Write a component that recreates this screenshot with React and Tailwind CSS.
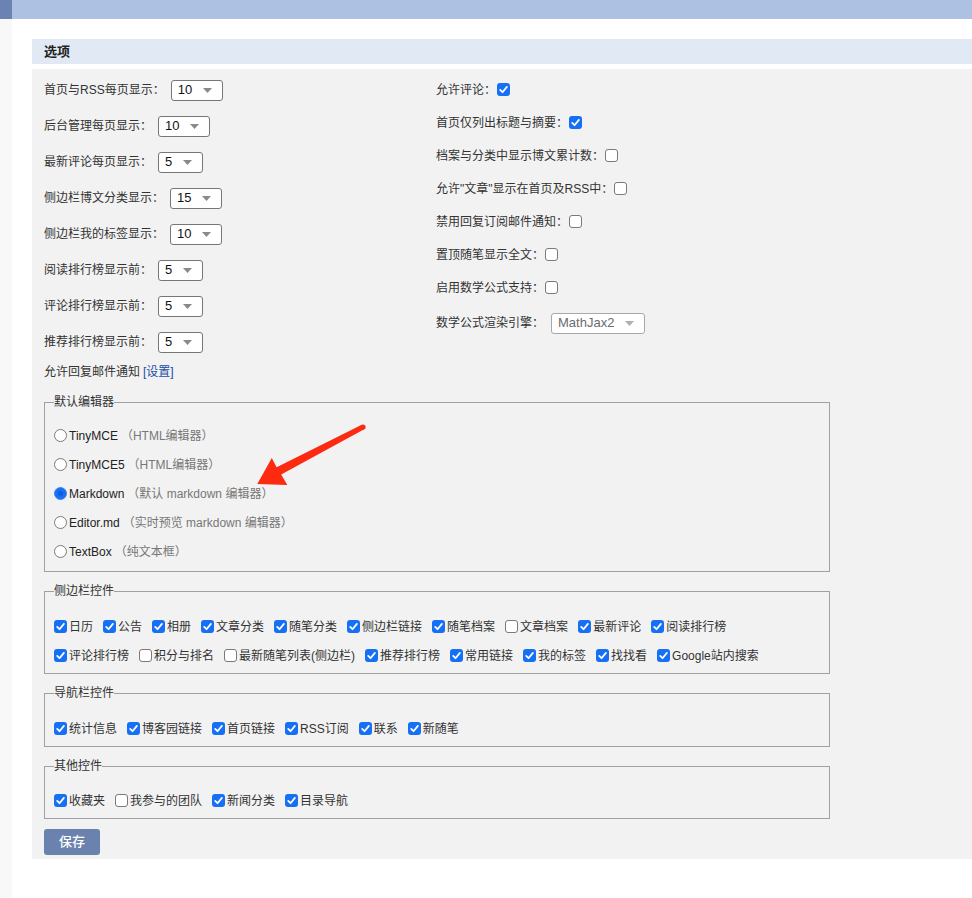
const font = "font-['Liberation_Sans','Noto_Sans_CJK_SC',sans-serif]"

function Box({ checked }) {
  if (checked) {
    return (
      <span className="inline-flex w-[13px] h-[13px] shrink-0 items-center justify-center rounded-[3px] bg-[#1570f6]">
        <svg width="13" height="13" viewBox="0 0 13 13">
          <path d="M3.2 6.9 L5.5 9.2 L9.9 3.9" fill="none" stroke="#fff" strokeWidth="1.8" strokeLinecap="round" strokeLinejoin="round" />
        </svg>
      </span>
    )
  }
  return <span className="inline-block w-[13px] h-[13px] shrink-0 rounded-[3px] border border-[#7a7a7a] bg-white"></span>
}

function Radio({ checked }) {
  if (checked) {
    return (
      <span className="inline-flex w-[13px] h-[13px] shrink-0 items-center justify-center rounded-full bg-[#1570f6] border border-[#3d86f5]">
        <span className="w-[5px] h-[5px] rounded-full bg-[#0f5fd6]"></span>
      </span>
    )
  }
  return <span className="inline-block w-[13px] h-[13px] shrink-0 rounded-full border border-[#7a7a7a] bg-white"></span>
}

function Select({ value, disabled }) {
  return (
    <span
      className={`inline-flex items-center h-[21px] pl-[6px] pr-[10px] rounded-[3px] border bg-white text-[13px] ${
        disabled ? 'border-[#a8a8a8] text-[#6b6b6b]' : 'border-[#767676] text-[#111]'
      }`}
    >
      {value}
      <svg className="ml-[11px]" width="9" height="5" viewBox="0 0 9 5">
        <path d="M0 0 H9 L4.5 5 Z" fill={disabled ? '#b0b0b0' : '#8a8a8a'} />
      </svg>
    </span>
  )
}

function Check({ label, checked }) {
  return (
    <label className="flex items-center mr-[10px]">
      <Box checked={checked} />
      <span className="ml-[2px]">{label}</span>
    </label>
  )
}

function Group({ title, className, children }) {
  return (
    <fieldset className={`w-[786px] border border-[#a0a0a0] px-[9px] ${className}`}>
      <legend className="text-[12px] text-[#333] leading-[16px]">{title}</legend>
      {children}
    </fieldset>
  )
}

const leftRows = [
  ['首页与RSS每页显示：', '10'],
  ['后台管理每页显示：', '10'],
  ['最新评论每页显示：', '5'],
  ['侧边栏博文分类显示：', '15'],
  ['侧边栏我的标签显示：', '10'],
  ['阅读排行榜显示前：', '5'],
  ['评论排行榜显示前：', '5'],
  ['推荐排行榜显示前：', '5'],
]

const rightRows = [
  ['允许评论：', true],
  ['首页仅列出标题与摘要：', true],
  ['档案与分类中显示博文累计数：', false],
  ['允许"文章"显示在首页及RSS中：', false],
  ['禁用回复订阅邮件通知：', false],
  ['置顶随笔显示全文：', false],
  ['启用数学公式支持：', false],
]

const editors = [
  ['TinyMCE', '（HTML编辑器）', false],
  ['TinyMCE5', '（HTML编辑器）', false],
  ['Markdown', '（默认 markdown 编辑器）', true],
  ['Editor.md', '（实时预览 markdown 编辑器）', false],
  ['TextBox', '（纯文本框）', false],
]

const sidebar1 = [
  ['日历', true], ['公告', true], ['相册', true], ['文章分类', true], ['随笔分类', true],
  ['侧边栏链接', true], ['随笔档案', true], ['文章档案', false], ['最新评论', true], ['阅读排行榜', true],
]
const sidebar2 = [
  ['评论排行榜', true], ['积分与排名', false], ['最新随笔列表(侧边栏)', false], ['推荐排行榜', true],
  ['常用链接', true], ['我的标签', true], ['找找看', true], ['Google站内搜索', true],
]
const navItems = [
  ['统计信息', true], ['博客园链接', true], ['首页链接', true], ['RSS订阅', true], ['联系', true], ['新随笔', true],
]
const otherItems = [
  ['收藏夹', true], ['我参与的团队', false], ['新闻分类', true], ['目录导航', true],
]

export default function App() {
  return (
    <div className={`relative min-h-[898px] bg-white text-[12px] text-[#333] ${font}`}>
      {/* top bar */}
      <div className="flex h-[19px]">
        <div className="w-[12px] bg-[#6a83b3]"></div>
        <div className="flex-1 bg-[#adc2e2]"></div>
      </div>

      <div className="flex min-h-[879px]">
        <div className="w-[12px] bg-[#f8f8f8]"></div>
        <div className="flex-1 pl-[20px] pt-[20px]">
          <div className="h-[25px] bg-[#e0e9f4] pl-[12px] flex items-center text-[13px] font-bold text-[#222]">选项</div>

          <div className="mt-[5px] bg-[#f2f2f2] px-[12px] pb-[4px]">
            <div className="flex">
              <div className="w-[392px] pt-[3px]">
                {leftRows.map(([label, value]) => (
                  <div key={label} className="h-[36px] flex items-center">
                    <span>{label}</span>
                    <span className="ml-[6px]">
                      <Select value={value} />
                    </span>
                  </div>
                ))}
                <div className="h-[24px] flex items-center">
                  允许回复邮件通知 <span className="ml-[3px] text-[#1c4ea6]">[设置]</span>
                </div>
              </div>

              <div className="pt-[4px]">
                {rightRows.map(([label, checked]) => (
                  <div key={label} className="h-[33px] flex items-center">
                    <span>{label}</span>
                    <span className="ml-[1px] flex">
                      <Box checked={checked} />
                    </span>
                  </div>
                ))}
                <div className="h-[38px] flex items-center">
                  <span>数学公式渲染引擎：</span>
                  <span className="ml-[7px]">
                    <Select value="MathJax2" disabled />
                  </span>
                </div>
              </div>
            </div>

            <Group title="默认编辑器" className="mt-[10px] pt-[11px] pb-[5px]">
              {editors.map(([name, desc, checked]) => (
                <div key={name} className="h-[29px] flex items-center">
                  <Radio checked={checked} />
                  <span className="ml-[2px] text-[#222]">{name}</span>
                  <span className="ml-[3px] text-[#777]">{desc}</span>
                </div>
              ))}
            </Group>

            <Group title="侧边栏控件" className="mt-[11px] pt-[13px] pb-[3px]">
              <div className="h-[29px] flex items-center">
                {sidebar1.map(([l, c]) => <Check key={l} label={l} checked={c} />)}
              </div>
              <div className="h-[29px] flex items-center">
                {sidebar2.map(([l, c]) => <Check key={l} label={l} checked={c} />)}
              </div>
            </Group>

            <Group title="导航栏控件" className="mt-[11px] pt-[13px] pb-[3px]">
              <div className="h-[29px] flex items-center">
                {navItems.map(([l, c]) => <Check key={l} label={l} checked={c} />)}
              </div>
            </Group>

            <Group title="其他控件" className="mt-[11px] pt-[12px] pb-[3px]">
              <div className="h-[29px] flex items-center">
                {otherItems.map(([l, c]) => <Check key={l} label={l} checked={c} />)}
              </div>
            </Group>

            <button className="mt-[10px] w-[56px] h-[26px] rounded-[3px] bg-[#6b82ae] text-white text-[13px] font-medium">
              保存
            </button>
          </div>
        </div>
      </div>

      {/* red annotation arrow */}
      <svg className="absolute left-0 top-0 pointer-events-none" width="972" height="898">
        <circle cx="363" cy="427" r="2.6" fill="#fb2a10" />
        <polygon
          points="361.8,424.7 276.6,467.2 271.8,458 257.3,484 287.3,485 281.2,474.6 364.2,429.3"
          fill="#fb2a10"
        />
      </svg>
    </div>
  )
}
